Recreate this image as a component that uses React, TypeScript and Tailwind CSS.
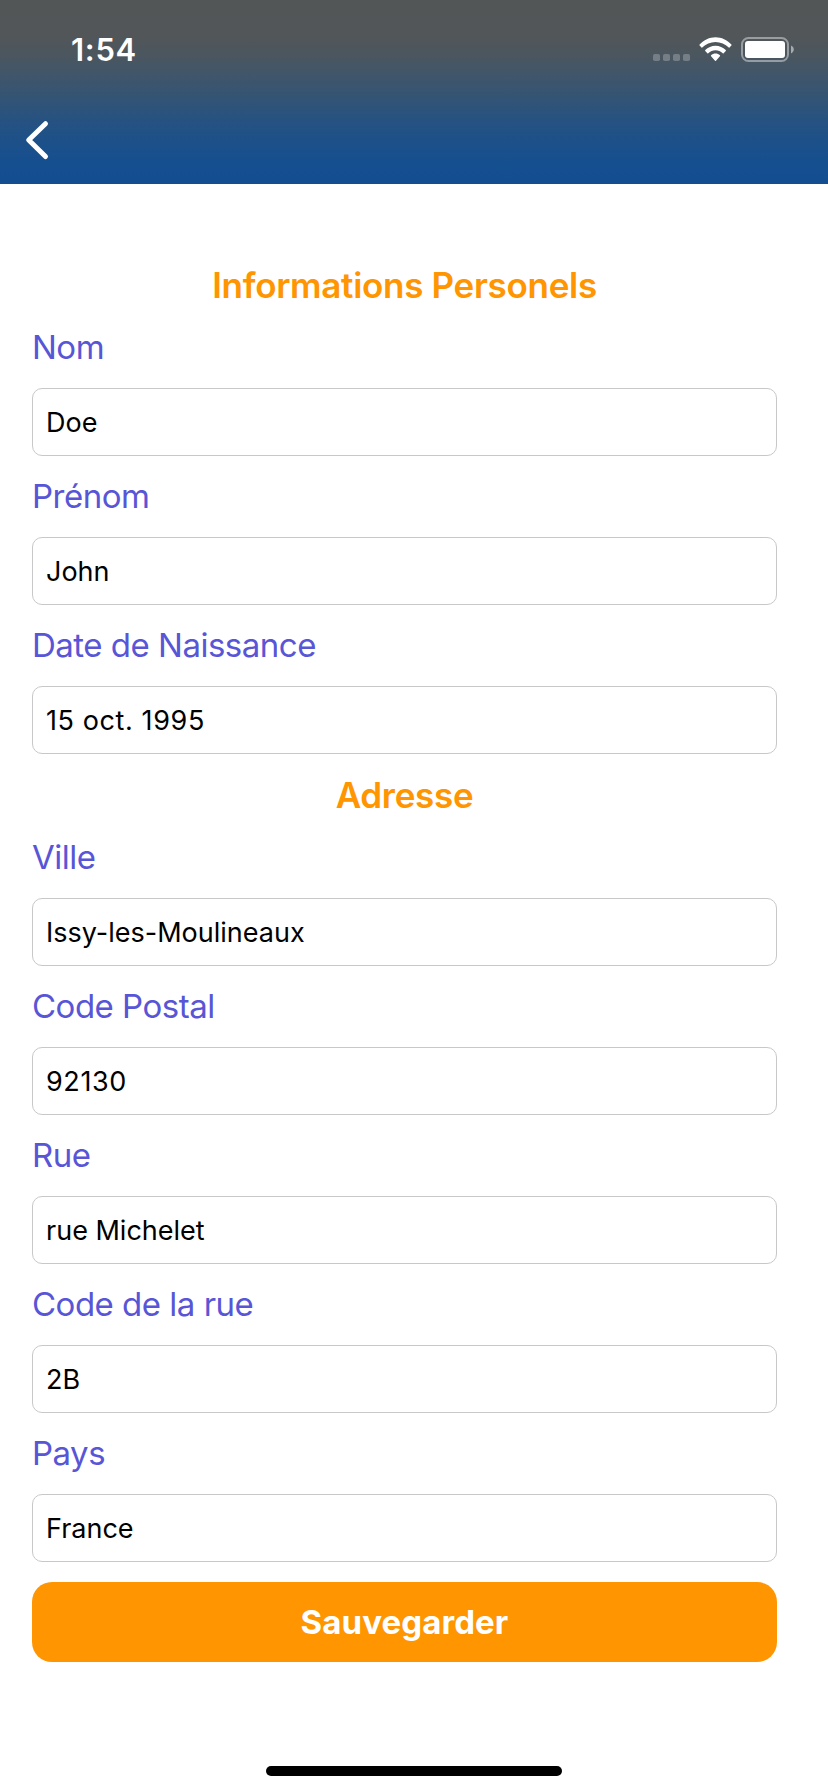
function StatusBar() {
  return (
    <div className="flex h-[98px] items-start justify-between pl-[71px] pr-[33px]">
      <span className="mt-[34px] text-[31px] font-semibold leading-8 tracking-[0.7px]">1:54</span>
      <div className="mt-[37px] flex items-start">
        <svg width="142" height="26" viewBox="0 0 142 26" fill="none">
          <g fill="#fff" fillOpacity="0.24">
            <rect x="0" y="17" width="7" height="7" rx="1.8" />
            <rect x="10" y="17" width="7" height="7" rx="1.8" />
            <rect x="20" y="17" width="7" height="7" rx="1.8" />
            <rect x="30" y="17" width="7" height="7" rx="1.8" />
          </g>
          <g fill="#fff" transform="translate(3.75 0) scale(0.94 1)">
            <path d="M62.5 4.900C67.900 4.900 72.900 7 76.600 10.600a.6.6 0 0 0 .8 0l2-2a.7.7 0 0 0 0-1C74.900 2.900 68.900.2 62.500.2S50.100 2.900 45.600 7.600a.7.7 0 0 0 0 1l2 2a.6.6 0 0 0 .8 0C52.100 7 57.100 4.900 62.500 4.900z" />
            <path d="M62.500 13.200c2.900 0 5.600 1.100 7.700 3a.7.7 0 0 0 1 0l2.200-2.200a.7.7 0 0 0 0-1c-2.900-2.700-6.700-4.300-10.900-4.300s-8 1.600-10.900 4.300a.7.7 0 0 0 0 1l2.200 2.200a.7.7 0 0 0 1 0c2.100-1.900 4.800-3 7.700-3z" />
            <path d="M67.200 19.300a.7.7 0 0 0 0-1c-1.200-1.100-2.900-1.700-4.700-1.700s-3.500.6-4.700 1.700a.7.7 0 0 0 0 1l4.200 4.400a.7.7 0 0 0 1 0z" />
          </g>
          <rect x="89" y="1" width="46" height="23" rx="6.500" stroke="#fff" strokeOpacity="0.42" strokeWidth="2" />
          <rect x="92" y="4" width="40" height="17" rx="3" fill="#fff" />
          <path d="M138 8.500v8c1.700-.7 2.800-2.300 2.800-4s-1.100-3.300-2.800-4z" fill="#fff" fillOpacity="0.5" />
        </svg>
      </div>
    </div>
  );
}

function Header() {
  return (
    <header className="flex h-[184px] flex-col bg-[linear-gradient(180deg,#535657_0px,#525659_35px,#4b565f_55px,#435668_70px,#355473_95px,#265281_120px,#1b508a_145px,#154f90_165px,#134e91_184px)] text-white">
      <StatusBar />
      <button type="button" aria-label="Retour" className="ml-6 mt-[21px] w-7">
        <svg width="28" height="42" viewBox="0 0 28 42" fill="none">
          <path d="M21.500 4.700 4.700 21l16.800 16.500" stroke="#fff" strokeWidth="5" strokeLinecap="round" strokeLinejoin="round" />
        </svg>
      </button>
    </header>
  );
}

function SectionTitle({ children }: { children: string }) {
  return (
    <h2 className="h-[63px] text-center text-[35px] font-semibold leading-[44px] tracking-[-0.3px] text-[#ff9500]">
      {children}
    </h2>
  );
}

function Field({ label, value, numeric = false }: { label: string; value: string; numeric?: boolean }) {
  return (
    <label className="mb-[19px] block">
      <span className="block h-[62px] pt-px text-[33px] leading-10 tracking-[-0.5px] text-[#5856d6]">{label}</span>
      <span
        className={`flex h-[68px] items-center rounded-[10px] border border-[#c8c8c8] pl-[13px] pt-[2px] text-[27px] text-black ${
          numeric ? "tracking-[0.6px]" : "tracking-[0px]"
        }`}
      >
        {value}
      </span>
    </label>
  );
}

export default function App() {
  return (
    <div className="flex h-[1792px] w-[828px] flex-col bg-white font-['Inter','Liberation_Sans',sans-serif]">
      <Header />
      <main className="ml-8 w-[745px] flex-1 pt-[79px]">
        <SectionTitle>Informations Personels</SectionTitle>
        <Field label="Nom" value="Doe" />
        <Field label="Prénom" value="John" />
        <Field label="Date de Naissance" value="15 oct. 1995" numeric />
        <SectionTitle>Adresse</SectionTitle>
        <Field label="Ville" value="Issy-les-Moulineaux" />
        <Field label="Code Postal" value="92130" numeric />
        <Field label="Rue" value="rue Michelet" />
        <Field label="Code de la rue" value="2B" />
        <Field label="Pays" value="France" />
        <button
          type="button"
          className="mt-px h-20 w-full rounded-[20px] bg-[#ff9500] pt-[2px] text-[33px] font-bold tracking-[0.1px] text-white"
        >
          Sauvegarder
        </button>
      </main>
      <div className="mb-4 h-[10px] w-[296px] self-center rounded-full bg-black" />
    </div>
  );
}
